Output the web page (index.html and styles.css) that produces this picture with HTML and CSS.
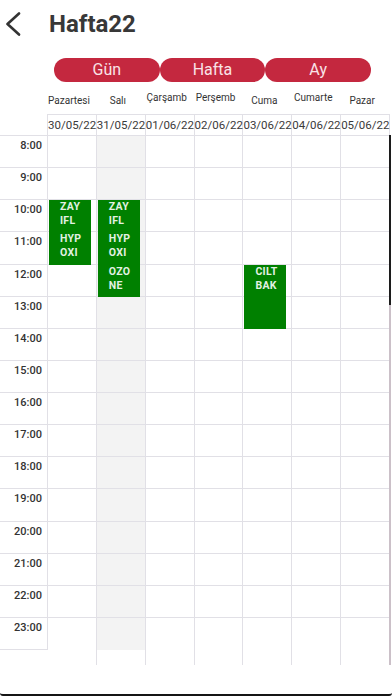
FILE: index.html
```html
<!DOCTYPE html>
<html lang="tr">
<head>
    <meta charset="UTF-8">
    <meta name="viewport" content="width=device-width, initial-scale=1.0">
    <title>Hafta22</title>
    <link rel="stylesheet" href="styles.css">
</head>
<body>
    <div class="topbar">
        <svg class="back" width="16" height="24" viewBox="0 0 16 24">
            <polyline points="14,1.5 2.5,12 14,22.5" fill="none" stroke="#333" stroke-width="2.6" stroke-linecap="round" stroke-linejoin="round"/>
        </svg>
        <h1 class="title">Hafta22</h1>
    </div>

    <div class="tabs">
        <div class="tab">Gün</div>
        <div class="tab">Hafta</div>
        <div class="tab">Ay</div>
    </div>

    <div class="cal">
        <div class="days">
            <div class="day"><span>Pazartesi</span></div>
            <div class="day"><span>Salı</span></div>
            <div class="day up"><span>Çarşamb</span></div>
            <div class="day up"><span>Perşemb</span></div>
            <div class="day"><span>Cuma</span></div>
            <div class="day up"><span>Cumarte</span></div>
            <div class="day"><span>Pazar</span></div>
        </div>

        <div class="dates-wrap">
            <div class="dates">
                <div class="date">30/05/22</div>
                <div class="date">31/05/22</div>
                <div class="date">01/06/22</div>
                <div class="date">02/06/22</div>
                <div class="date">03/06/22</div>
                <div class="date">04/06/22</div>
                <div class="date">05/06/22</div>
            </div>
        </div>

        <div class="grid">
            <div class="row"><div class="time">8:00</div><div class="c"></div><div class="c today"></div><div class="c"></div><div class="c"></div><div class="c"></div><div class="c"></div><div class="c"></div></div>
            <div class="row"><div class="time">9:00</div><div class="c"></div><div class="c today"></div><div class="c"></div><div class="c"></div><div class="c"></div><div class="c"></div><div class="c"></div></div>
            <div class="row"><div class="time">10:00</div><div class="c"></div><div class="c today"></div><div class="c"></div><div class="c"></div><div class="c"></div><div class="c"></div><div class="c"></div></div>
            <div class="row"><div class="time">11:00</div><div class="c"></div><div class="c today"></div><div class="c"></div><div class="c"></div><div class="c"></div><div class="c"></div><div class="c"></div></div>
            <div class="row"><div class="time">12:00</div><div class="c"></div><div class="c today"></div><div class="c"></div><div class="c"></div><div class="c"></div><div class="c"></div><div class="c"></div></div>
            <div class="row"><div class="time">13:00</div><div class="c"></div><div class="c today"></div><div class="c"></div><div class="c"></div><div class="c"></div><div class="c"></div><div class="c"></div></div>
            <div class="row"><div class="time">14:00</div><div class="c"></div><div class="c today"></div><div class="c"></div><div class="c"></div><div class="c"></div><div class="c"></div><div class="c"></div></div>
            <div class="row"><div class="time">15:00</div><div class="c"></div><div class="c today"></div><div class="c"></div><div class="c"></div><div class="c"></div><div class="c"></div><div class="c"></div></div>
            <div class="row"><div class="time">16:00</div><div class="c"></div><div class="c today"></div><div class="c"></div><div class="c"></div><div class="c"></div><div class="c"></div><div class="c"></div></div>
            <div class="row"><div class="time">17:00</div><div class="c"></div><div class="c today"></div><div class="c"></div><div class="c"></div><div class="c"></div><div class="c"></div><div class="c"></div></div>
            <div class="row"><div class="time">18:00</div><div class="c"></div><div class="c today"></div><div class="c"></div><div class="c"></div><div class="c"></div><div class="c"></div><div class="c"></div></div>
            <div class="row"><div class="time">19:00</div><div class="c"></div><div class="c today"></div><div class="c"></div><div class="c"></div><div class="c"></div><div class="c"></div><div class="c"></div></div>
            <div class="row"><div class="time">20:00</div><div class="c"></div><div class="c today"></div><div class="c"></div><div class="c"></div><div class="c"></div><div class="c"></div><div class="c"></div></div>
            <div class="row"><div class="time">21:00</div><div class="c"></div><div class="c today"></div><div class="c"></div><div class="c"></div><div class="c"></div><div class="c"></div><div class="c"></div></div>
            <div class="row"><div class="time">22:00</div><div class="c"></div><div class="c today"></div><div class="c"></div><div class="c"></div><div class="c"></div><div class="c"></div><div class="c"></div></div>
            <div class="row last"><div class="time">23:00</div><div class="c"></div><div class="c today"></div><div class="c"></div><div class="c"></div><div class="c"></div><div class="c"></div><div class="c"></div></div>
            <div class="row tail"><div class="time"></div><div class="c"></div><div class="c"></div><div class="c"></div><div class="c"></div><div class="c"></div><div class="c"></div><div class="c"></div></div>

            <!-- randevular: left = 48 + gün * 342/7 + 1, top = (saat - 8) * 32.125 -->
            <div class="event" style="left: 49px; top: 64.25px; height: 64.25px;">
                <div class="ev-item">ZAY<br>IFL</div>
                <div class="ev-item">HYP<br>OXI</div>
            </div>
            <div class="event" style="left: 97.86px; top: 64.25px; height: 96.375px;">
                <div class="ev-item">ZAY<br>IFL</div>
                <div class="ev-item">HYP<br>OXI</div>
                <div class="ev-item">OZO<br>NE</div>
            </div>
            <div class="event" style="left: 244.43px; top: 128.5px; height: 64.25px;">
                <div class="ev-item">CILT<br>BAK</div>
            </div>

            <div class="scrollbar"><div class="thumb"></div></div>
        </div>
    </div>

    <div class="foot"></div>
</body>
</html>
```

FILE: styles.css
```css
html, body {
    margin: 0;
    padding: 0;
    height: 696px;
    overflow: hidden;
}
body {
    font-family: Roboto, "Noto Sans", sans-serif;
    background: #fff;
    color: #333;
}
.topbar {
    display: flex;
    align-items: flex-start;
    height: 48px;
}
.back {
    margin: 12px 0 0 5px;
}
.title {
    margin: 10px 0 0 28px;
    font-size: 24px;
    line-height: 28px;
    font-weight: bold;
    color: #383838;
}
.tabs {
    display: flex;
    width: 317px;
    margin: 10px 0 0 54px;
}
.tab {
    flex: 1;
    height: 24px;
    line-height: 24px;
    text-align: center;
    background: #c4283f;
    color: #f9e3e7;
    font-size: 16px;
    border-radius: 12px;
}
.cal {
    width: 390px;
}
.days {
    display: flex;
    height: 32px;
    padding-left: 48px;
    box-sizing: border-box;
}
.day {
    flex: 1;
    padding-top: 13px;
    font-size: 10px;
    line-height: 12px;
    color: #333;
}
.day.up {
    padding-top: 10px;
}
.day span {
    display: block;
    width: 42px;
    text-align: center;
    white-space: nowrap;
}
.dates-wrap {
    border-bottom: 1px solid #e1e0e6;
}
.dates {
    display: flex;
    height: 21px;
    margin-left: 47px;
    border-top: 1px solid #e1e0e6;
    border-left: 1px solid #e1e0e6;
    box-sizing: border-box;
}
.date {
    flex: 1;
    min-width: 0;
    border-right: 1px solid #e1e0e6;
    font-size: 11.5px;
    line-height: 20px;
    color: #3a3a3a;
    white-space: nowrap;
}
.grid {
    position: relative;
}
.row {
    display: flex;
    height: 32.125px;
}
.row > div {
    box-sizing: border-box;
    border-bottom: 1px solid #e1e0e6;
    border-right: 1px solid #e1e0e6;
}
.time {
    width: 48px;
    padding: 3px 5px 0 0;
    text-align: right;
    font-size: 11px;
    line-height: 13px;
    font-weight: 500;
    color: #333;
}
.c {
    flex: 1;
    min-width: 0;
}
.c.today {
    background: #f3f3f3;
}
.row.last .c {
    border-bottom: 0;
}
.row.tail {
    height: 15px;
}
.row.tail > div {
    border-bottom: 0;
}
.row.tail .time {
    border-right: 0;
}
.event {
    position: absolute;
    width: 42px;
    background: #008000;
    color: #e2f1e2;
    font-size: 10.5px;
    font-weight: bold;
    letter-spacing: 0.3px;
}
.ev-item {
    height: 32.125px;
    padding-left: 11px;
    line-height: 14px;
}
.scrollbar {
    position: absolute;
    left: 389px;
    top: -1px;
    width: 2px;
    height: 530px;
    background: #cbc0c8;
}
.thumb {
    height: 170px;
    background: #1c1c1c;
}
.foot {
    height: 31px;
    box-sizing: border-box;
    border-bottom: 2px solid #151515;
    border-radius: 0 0 3px 3px;
}
```
